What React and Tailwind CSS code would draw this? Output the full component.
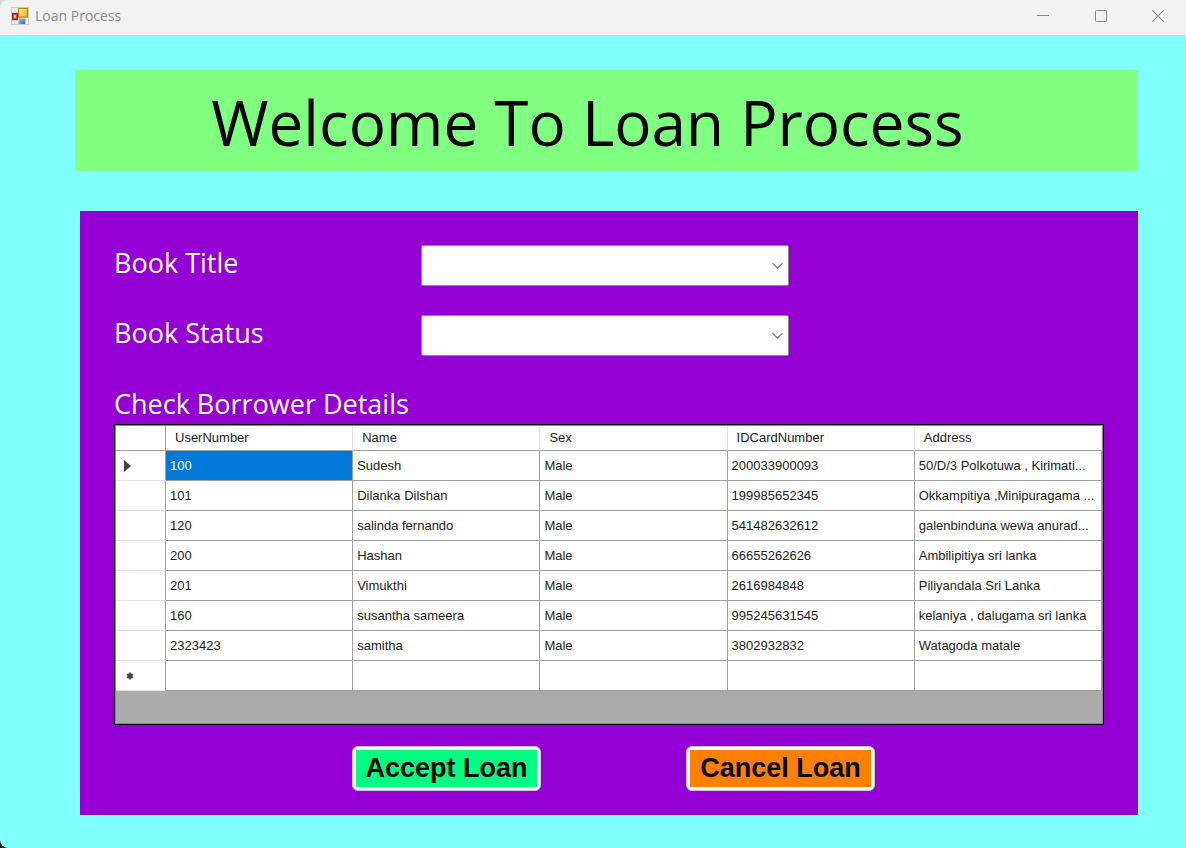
import React from "react";

const columns = ["UserNumber", "Name", "Sex", "IDCardNumber", "Address"];

const borrowers = [
  ["100", "Sudesh", "Male", "200033900093", "50/D/3 Polkotuwa , Kirimati..."],
  ["101", "Dilanka Dilshan", "Male", "199985652345", "Okkampitiya ,Minipuragama ..."],
  ["120", "salinda fernando", "Male", "541482632612", "galenbinduna wewa anurad..."],
  ["200", "Hashan", "Male", "66655262626", "Ambilipitiya sri lanka"],
  ["201", "Vimukthi", "Male", "2616984848", "Piliyandala Sri Lanka"],
  ["160", "susantha sameera", "Male", "995245631545", "kelaniya , dalugama sri lanka"],
  ["2323423", "samitha", "Male", "3802932832", "Watagoda matale"],
  ["", "", "", "", ""],
];

function AppIcon() {
  return (
    <svg width="18" height="18" viewBox="0 0 18 18" aria-hidden="true">
      <defs>
        <linearGradient id="gold" x1="0" y1="0" x2="1" y2="1">
          <stop offset="0" stopColor="#fff0a0" />
          <stop offset="1" stopColor="#e8ab10" />
        </linearGradient>
        <linearGradient id="azure" x1="0" y1="0" x2="1" y2="1">
          <stop offset="0" stopColor="#8fbcff" />
          <stop offset="1" stopColor="#2f66cf" />
        </linearGradient>
      </defs>
      <rect width="18" height="18" fill="#c9c9c9" />
      <path d="M1 1h6v4H1zM1 14h6v3H1zM15 11h2v6h-2z" fill="#f4f4f4" />
      <path d="M4 1v4M4 14v3" stroke="#d4d4d4" />
      <rect x="1" y="6" width="6" height="7" fill="#a52420" />
      <rect x="2" y="7" width="4" height="5" fill="#c94640" />
      <rect x="3" y="8" width="2" height="3" fill="#f3b2a8" />
      <rect x="7.5" y="1.5" width="9" height="8.5" fill="url(#gold)" stroke="#b88208" />
      <rect x="8" y="12" width="6" height="5" fill="url(#azure)" />
    </svg>
  );
}

function TitleBar() {
  return (
    <header className="flex h-[35px] items-center justify-between bg-[#f2f2f2] pl-[11px] text-[#8c8c8c]">
      <div className="flex items-center gap-[6px] pb-1">
        <AppIcon />
        <span className="text-[14px] leading-5">Loan Process</span>
      </div>
      <div className="flex h-full pb-1">
        <button aria-label="Minimize" className="flex w-[58px] items-center justify-center">
          <svg width="12" height="12" viewBox="0 0 12 12" fill="none" stroke="currentColor"><path d="M0 5.5h12" /></svg>
        </button>
        <button aria-label="Maximize" className="flex w-[58px] items-center justify-center">
          <svg width="12" height="12" viewBox="0 0 12 12" fill="none" stroke="currentColor"><rect x="0.5" y="0.5" width="11" height="11" rx="1" /></svg>
        </button>
        <button aria-label="Close" className="flex w-[56px] items-center justify-center">
          <svg width="12" height="12" viewBox="0 0 12 12" fill="none" stroke="currentColor" strokeWidth="1.2"><path d="M0.3 0.3l11.4 11.4M11.7 0.3L0.3 11.7" /></svg>
        </button>
      </div>
    </header>
  );
}

function Field({ id, label }) {
  return (
    <div className="flex items-start">
      <label htmlFor={id} className="w-[307px] text-[27px] leading-9">{label}</label>
      <div className="relative w-[368px]">
        <select id={id} className="block h-[41px] w-full appearance-none rounded-xs border border-[#8a8a8a] bg-white px-2 text-black">
          <option value=""></option>
        </select>
        <svg className="pointer-events-none absolute top-[17px] right-[6px]" width="11" height="8" viewBox="0 0 11 8" fill="none" stroke="#777" strokeWidth="1.2">
          <path d="M0.5 1.2L5.5 6.2L10.5 1.2" />
        </svg>
      </div>
    </div>
  );
}

function RowMarker({ index }) {
  if (index === 0) {
    return <svg width="7" height="12" viewBox="0 0 7 12" aria-hidden="true"><path d="M0 0L7 6L0 12z" fill="#444" /></svg>;
  }
  if (index === borrowers.length - 1) {
    return (
      <svg className="ml-[2px]" width="8" height="8" viewBox="0 0 8 8" stroke="#555" strokeWidth="1.4" aria-hidden="true">
        <path d="M4 0.3v7.4M0.8 2L7.2 6M7.2 2L0.8 6" />
        <circle cx="4" cy="4" r="2.8" fill="#444" stroke="none" />
      </svg>
    );
  }
  return null;
}

function BorrowerTable() {
  return (
    <div className="border border-black">
      <div className="border border-[#8a8a8a] bg-[#ababab] pb-8">
        <table aria-labelledby="borrowers" className="w-full table-fixed border-separate border-spacing-0 bg-white text-left font-['Liberation_Sans',sans-serif] text-[13px] leading-4 text-[#1c1c1c]">
          <colgroup>
            <col className="w-[50px]" />
            <col /><col /><col /><col /><col />
          </colgroup>
          <thead>
            <tr>
              <th className="h-[25px] border-r border-b border-[#a0a0a0]"></th>
              {columns.map((c) => (
                <th key={c} scope="col" className="h-[25px] border-r border-b border-r-[#e3e3e3] border-b-[#a0a0a0] pl-[9px] font-normal">{c}</th>
              ))}
            </tr>
          </thead>
          <tbody>
            {borrowers.map((row, r) => (
              <tr key={r}>
                <th className="h-[30px] border-r border-b border-r-[#a0a0a0] border-b-[#e3e3e3] pl-2">
                  <RowMarker index={r} />
                </th>
                {row.map((value, c) => (
                  <td
                    key={c}
                    className={
                      r === 0 && c === 0
                        ? "h-[30px] border-r border-b border-[#a0a0a0] bg-[#0078d7] pl-1 whitespace-nowrap text-white"
                        : "h-[30px] border-r border-b border-[#a0a0a0] pl-1 whitespace-nowrap"
                    }
                  >
                    {value}
                  </td>
                ))}
              </tr>
            ))}
          </tbody>
        </table>
      </div>
    </div>
  );
}

export default function App() {
  return (
    <div className="min-h-screen bg-linear-to-b from-[#d8d8d8] to-black">
      <div className="flex min-h-screen flex-col overflow-hidden rounded-l-lg bg-[#80ffff] font-['Open_Sans',sans-serif]">
        <TitleBar />
        <main className="pt-[35px] pr-12 pb-[33px] pl-[75px]">
          <h1 className="bg-[#80ff80] pt-1 pr-[38px] text-center text-[62px] leading-[97px] whitespace-nowrap text-black">
            Welcome To Loan Process
          </h1>
          <section className="mt-10 ml-[5px] bg-[#9400d3] px-[34px] pt-[34px] pb-6 text-white">
            <div className="flex flex-col gap-[29px]">
              <Field id="title" label="Book Title" />
              <Field id="status" label="Book Status" />
            </div>
            <h2 id="borrowers" className="mt-[30px] mb-[2px] text-[27px] leading-9">Check Borrower Details</h2>
            <BorrowerTable />
            <div className="mt-[21px] flex justify-center gap-[145px] pl-[9px] font-['Liberation_Sans',sans-serif] text-[27px] leading-none font-bold text-black">
              <button className="h-[45px] w-[189px] rounded-md border border-[#c9c0d0] bg-white p-[3px]">
                <span className="flex h-full items-center justify-center bg-[#00ff80]">Accept Loan</span>
              </button>
              <button className="h-[45px] w-[189px] rounded-md border border-[#c9c0d0] bg-white p-[3px]">
                <span className="flex h-full items-center justify-center bg-[#ff8000]">Cancel Loan</span>
              </button>
            </div>
          </section>
        </main>
      </div>
    </div>
  );
}
